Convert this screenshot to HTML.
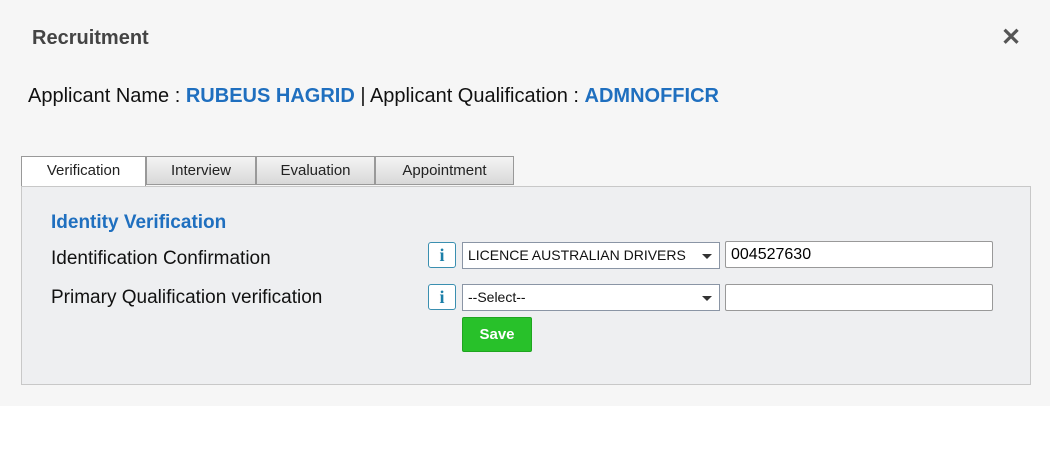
<!DOCTYPE html>
<html><head><style>
body{margin:0;width:1050px;height:450px;background:#fff;font-family:"Liberation Sans",sans-serif;position:relative;overflow:hidden}
.modal{position:absolute;left:0;top:0;width:1050px;height:406px;background:#f6f6f6}
.abs{position:absolute;white-space:nowrap}
.tab{position:absolute;top:156px;height:29px;border:1px solid #999;background:linear-gradient(#f4f4f4,#d8d8d8);font-size:15px;color:#222;text-align:center;line-height:28px;box-sizing:border-box}
.panel{position:absolute;left:21px;top:186px;width:1010px;height:199px;border:1px solid #c8c8c8;background:#eeeff1;box-sizing:border-box}
.info{position:absolute;width:28px;height:26px;border:1px solid #3a8fb0;border-radius:3px;background:#fff;box-sizing:border-box;color:#1b7fa8;font:bold 18px "Liberation Serif",serif;text-align:center;line-height:24px}
.sel{position:absolute;width:258px;height:27px;border:1px solid #8a95a5;background:#fff;box-sizing:border-box;font-size:14px;color:#111;line-height:25px;padding-left:5px}
.sel:after{content:"";position:absolute;right:7px;top:11px;border-left:5px solid transparent;border-right:5px solid transparent;border-top:5px solid #333}
.inp{position:absolute;left:725px;width:268px;height:27px;border:1px solid #999;border-radius:2px;background:#fff;box-sizing:border-box;font-size:16px;line-height:25px;padding-left:5px}
.lbl{position:absolute;left:51px;font-size:19px;color:#111}
</style></head><body>
<div class="modal">
<div class="abs" style="left:32px;top:27px;font-size:20px;font-weight:bold;color:#444">Recruitment</div>
<div class="abs" style="left:1001px;top:23px;font-size:24px;font-weight:bold;color:#555">✕</div>
<div class="abs" style="left:28px;top:85px;font-size:20px;color:#111">Applicant Name : <b style="color:#1f6fbf">RUBEUS HAGRID</b> | Applicant Qualification : <b style="color:#1f6fbf">ADMNOFFICR</b></div>
<div class="tab" style="left:21px;width:125px;background:#fff;border-bottom:none;height:31px">Verification</div>
<div class="tab" style="left:146px;width:110px">Interview</div>
<div class="tab" style="left:256px;width:119px">Evaluation</div>
<div class="tab" style="left:375px;width:139px">Appointment</div>
<div class="panel"></div>
<div class="abs" style="left:51px;top:212px;font-size:19px;font-weight:bold;color:#1f6fbf">Identity Verification</div>
<div class="lbl" style="top:248px">Identification Confirmation</div>
<div class="lbl" style="top:287px">Primary Qualification verification</div>
<div class="info" style="left:428px;top:242px">i</div>
<div class="info" style="left:428px;top:284px">i</div>
<div class="sel" style="left:462px;top:242px">LICENCE AUSTRALIAN DRIVERS</div>
<div class="sel" style="left:462px;top:284px">--Select--</div>
<div class="inp" style="top:241px">004527630</div>
<div class="inp" style="top:284px"></div>
<div class="abs" style="left:462px;top:317px;width:70px;height:35px;background:#28c12a;border:1px solid #1fa520;border-radius:2px;box-sizing:border-box;color:#fff;font-weight:bold;font-size:15px;text-align:center;line-height:33px">Save</div>
</div>
</body></html>
